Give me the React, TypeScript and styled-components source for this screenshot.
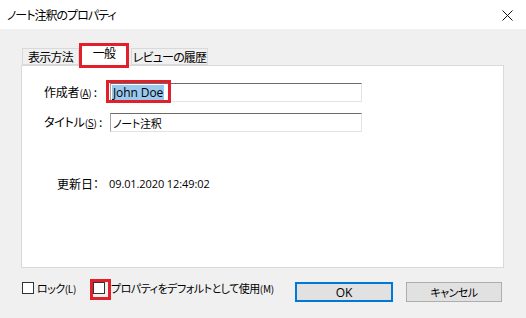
import React from "react";
import styled, { createGlobalStyle } from "styled-components";

const Global = createGlobalStyle`
  html, body { margin: 0; padding: 0; }
  body {
    width: 526px; height: 318px; overflow: hidden;
    background: #f0f0f0;
    font-family: "Noto Sans CJK JP", "Noto Sans", sans-serif;
    font-feature-settings: "palt";
    color: #000;
  }
`;

const Window = styled.div`
  width: 526px;
  height: 318px;
  display: flex;
  flex-direction: column;
  background: #f0f0f0;
`;

const TitleBar = styled.div`
  height: 29px;
  background: #fff;
  display: flex;
  align-items: center;
  justify-content: space-between;
  padding: 0 13px 0 7px;
  box-sizing: border-box;
`;

const TitleText = styled.span`
  font-size: 12px;
  line-height: 14px;
  letter-spacing: -1px;
`;

const CloseIcon = styled.svg`
  width: 11px;
  height: 11px;
  margin-top: 1px;
`;

const Body = styled.div`
  padding: 15px 22px 0 21px;
  display: flex;
  flex-direction: column;
`;

const TabRow = styled.div`
  display: flex;
  align-items: flex-end;
  height: 21px;
  padding-left: 1px;
  position: relative;
  z-index: 1;
`;

const Tab = styled.div<{ $active?: boolean; $w: number; $ml?: number }>`
  position: relative;
  width: ${(p) => p.$w}px;
  margin-left: ${(p) => p.$ml ?? 0}px;
  box-sizing: border-box;
  height: ${(p) => (p.$active ? 22 : 17)}px;
  margin-bottom: ${(p) => (p.$active ? -1 : 0)}px;
  background: ${(p) => (p.$active ? "#fff" : "#f0f0f0")};
  border: 1px solid #d9d9d9;
  border-bottom: ${(p) => (p.$active ? "none" : "1px solid #d9d9d9")};
  font-size: 12px;
  line-height: ${(p) => (p.$active ? 16 : 15)}px;
  letter-spacing: -0.8px;
  text-align: center;
  white-space: nowrap;
`;

const Mark = styled.span<{ $t: number; $r: number; $b: number; $l: number }>`
  position: absolute;
  top: ${(p) => p.$t}px;
  right: ${(p) => p.$r}px;
  bottom: ${(p) => p.$b}px;
  left: ${(p) => p.$l}px;
  border: 3px solid #e2202b;
  pointer-events: none;
`;

const Panel = styled.div`
  width: 483px;
  height: 203px;
  box-sizing: border-box;
  background: #fff;
  border: 1px solid #d9d9d9;
  padding: 17px 0 0 22px;
  display: flex;
  flex-direction: column;
`;

const FieldRow = styled.div<{ $gap?: number }>`
  display: flex;
  align-items: center;
  height: 19px;
  margin-top: ${(p) => p.$gap ?? 0}px;
`;

const Label = styled.span`
  width: 66px;
  font-size: 12px;
  line-height: 14px;
  white-space: nowrap;
  letter-spacing: -0.2px;
`;

const Small = styled.span`
  font-size: 10px;
  letter-spacing: -0.3px;
`;

const Input = styled.div`
  position: relative;
  width: 252px;
  height: 19px;
  box-sizing: border-box;
  border-top: 1px solid #6b6b6b;
  border-left: 1px solid #a3a3a3;
  border-right: 1px solid #e3e3e3;
  border-bottom: 1px solid #e3e3e3;
  display: flex;
  align-items: center;
  padding-left: 1px;
  font-size: 12px;
`;

const Selected = styled.span`
  background: #99c9ef;
  font-family: "Open Sans", "Noto Sans", sans-serif;
  font-size: 12px;
  line-height: 16px;
  padding: 0 1px;
  letter-spacing: -0.1px;
`;

const InputText = styled.span`
  font-size: 11px;
  line-height: 16px;
  padding-left: 1px;
  letter-spacing: -0.3px;
`;

const DateRow = styled.div`
  display: flex;
  align-items: center;
  margin-top: 43px;
  padding-left: 13px;
  height: 16px;
`;

const DateLabel = styled.span`
  width: 52px;
  font-size: 12px;
  white-space: nowrap;
`;

const DateValue = styled.span`
  font-family: "Open Sans", "Noto Sans", sans-serif;
  font-size: 11px;
  letter-spacing: -0.1px;
`;

const Footer = styled.div`
  display: flex;
  align-items: flex-start;
  margin-top: 14px;
  margin-left: 1px;
  height: 20px;
`;

const Check = styled.span`
  position: relative;
  width: 12px;
  height: 12px;
  box-sizing: border-box;
  border: 1px solid #333;
  background: #fff;
  flex: none;
`;

const CheckLabel = styled.span<{ $ml: number; $w: number }>`
  margin-left: ${(p) => p.$ml}px;
  width: ${(p) => p.$w}px;
  font-size: 11px;
  line-height: 13px;
  letter-spacing: -0.5px;
  white-space: nowrap;
`;

const Button = styled.div<{ $default?: boolean; $w: number; $ml: number }>`
  width: ${(p) => p.$w}px;
  height: 20px;
  margin-left: ${(p) => p.$ml}px;
  box-sizing: border-box;
  background: #e1e1e1;
  border: ${(p) => (p.$default ? "2px solid #0078d7" : "1px solid #adadad")};
  display: flex;
  align-items: center;
  justify-content: center;
  font-family: "Open Sans", "Noto Sans CJK JP", sans-serif;
  font-size: 12px;
`;

const BtnJa = styled.span`
  font-family: "Noto Sans CJK JP", sans-serif;
  font-size: 11px;
  letter-spacing: -0.5px;
`;

export default function App() {
  return (
    <>
      <Global />
      <Window>
        <TitleBar>
          <TitleText>ノート注釈のプロパティ</TitleText>
          <CloseIcon viewBox="0 0 11 11">
            <path d="M0.5 0.5 L10.5 10.5 M10.5 0.5 L0.5 10.5" stroke="#111" strokeWidth="1" />
          </CloseIcon>
        </TitleBar>
        <Body>
          <TabRow>
            <Tab $w={57}>表示方法</Tab>
            <Tab $w={50} $active>
              一般
              <Mark $t={-2} $r={-1} $b={-2} $l={-1} />
            </Tab>
            <Tab $w={77} $ml={2}>
              レビューの履歴
            </Tab>
          </TabRow>
          <Panel>
            <FieldRow>
              <Label>
                作成者<Small>(<u>A</u>)</Small> :
              </Label>
              <Input>
                <Selected>John Doe</Selected>
                <Mark $t={-4} $r={190} $b={-2} $l={-5} />
              </Input>
            </FieldRow>
            <FieldRow $gap={11}>
              <Label>
                タイトル<Small>(<u>S</u>)</Small> :
              </Label>
              <Input>
                <InputText>ノート注釈</InputText>
              </Input>
            </FieldRow>
            <DateRow>
              <DateLabel>更新日：</DateLabel>
              <DateValue>09.01.2020 12:49:02</DateValue>
            </DateRow>
          </Panel>
          <Footer>
            <Check />
            <CheckLabel $ml={3} $w={56}>
              ロック<Small>(L)</Small>
            </CheckLabel>
            <Check>
              <Mark $t={-4} $r={-7} $b={-7} $l={-4} />
            </Check>
            <CheckLabel $ml={6} $w={182}>
              プロパティをデフォルトとして使用<Small>(M)</Small>
            </CheckLabel>
            <Button $default $w={98} $ml={2}>
              OK
            </Button>
            <Button $w={96} $ml={13}>
              <BtnJa>キャンセル</BtnJa>
            </Button>
          </Footer>
        </Body>
      </Window>
    </>
  );
}
